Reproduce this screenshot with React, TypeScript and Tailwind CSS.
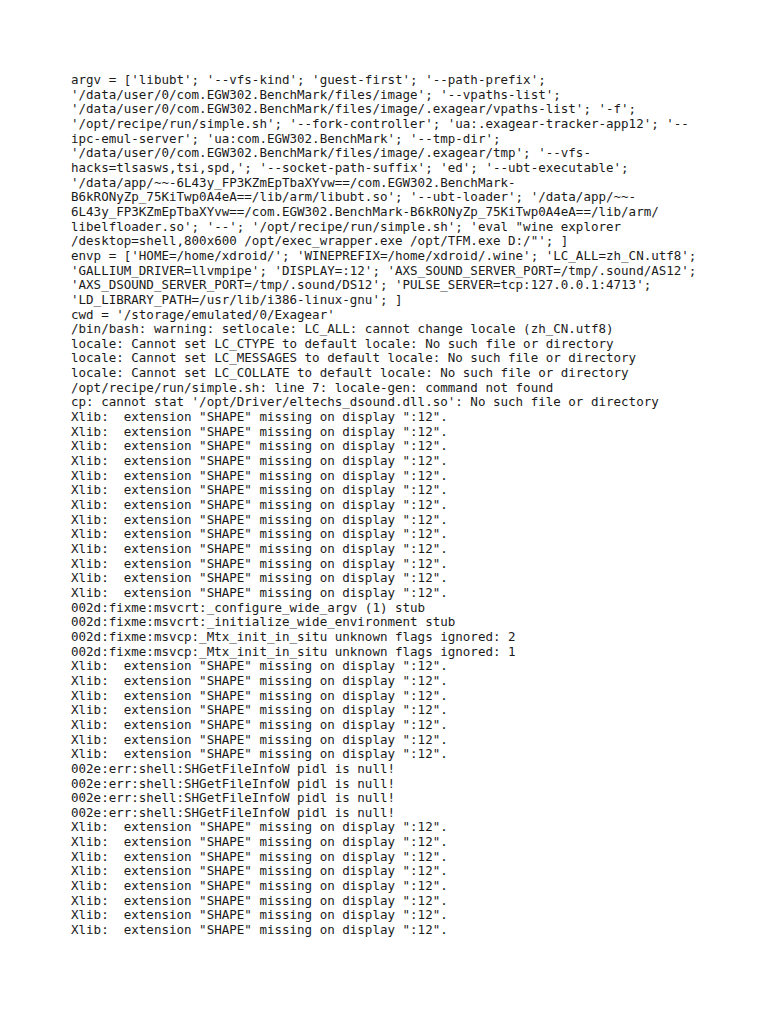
const xlib = 'Xlib:  extension "SHAPE" missing on display ":12".';
const shErr = "002e:err:shell:SHGetFileInfoW pidl is null!";

const logLines: string[] = [
  "argv = ['libubt'; '--vfs-kind'; 'guest-first'; '--path-prefix';",
  "'/data/user/0/com.EGW302.BenchMark/files/image'; '--vpaths-list';",
  "'/data/user/0/com.EGW302.BenchMark/files/image/.exagear/vpaths-list'; '-f';",
  "'/opt/recipe/run/simple.sh'; '--fork-controller'; 'ua:.exagear-tracker-app12'; '--",
  "ipc-emul-server'; 'ua:com.EGW302.BenchMark'; '--tmp-dir';",
  "'/data/user/0/com.EGW302.BenchMark/files/image/.exagear/tmp'; '--vfs-",
  "hacks=tlsasws,tsi,spd,'; '--socket-path-suffix'; 'ed'; '--ubt-executable';",
  "'/data/app/~~-6L43y_FP3KZmEpTbaXYvw==/com.EGW302.BenchMark-",
  "B6kRONyZp_75KiTwp0A4eA==/lib/arm/libubt.so'; '--ubt-loader'; '/data/app/~~-",
  "6L43y_FP3KZmEpTbaXYvw==/com.EGW302.BenchMark-B6kRONyZp_75KiTwp0A4eA==/lib/arm/",
  "libelfloader.so'; '--'; '/opt/recipe/run/simple.sh'; 'eval \"wine explorer",
  "/desktop=shell,800x600 /opt/exec_wrapper.exe /opt/TFM.exe D:/\"'; ]",
  "envp = ['HOME=/home/xdroid/'; 'WINEPREFIX=/home/xdroid/.wine'; 'LC_ALL=zh_CN.utf8';",
  "'GALLIUM_DRIVER=llvmpipe'; 'DISPLAY=:12'; 'AXS_SOUND_SERVER_PORT=/tmp/.sound/AS12';",
  "'AXS_DSOUND_SERVER_PORT=/tmp/.sound/DS12'; 'PULSE_SERVER=tcp:127.0.0.1:4713';",
  "'LD_LIBRARY_PATH=/usr/lib/i386-linux-gnu'; ]",
  "cwd = '/storage/emulated/0/Exagear'",
  "/bin/bash: warning: setlocale: LC_ALL: cannot change locale (zh_CN.utf8)",
  "locale: Cannot set LC_CTYPE to default locale: No such file or directory",
  "locale: Cannot set LC_MESSAGES to default locale: No such file or directory",
  "locale: Cannot set LC_COLLATE to default locale: No such file or directory",
  "/opt/recipe/run/simple.sh: line 7: locale-gen: command not found",
  "cp: cannot stat '/opt/Driver/eltechs_dsound.dll.so': No such file or directory",
  ...Array(13).fill(xlib),
  "002d:fixme:msvcrt:_configure_wide_argv (1) stub",
  "002d:fixme:msvcrt:_initialize_wide_environment stub",
  "002d:fixme:msvcp:_Mtx_init_in_situ unknown flags ignored: 2",
  "002d:fixme:msvcp:_Mtx_init_in_situ unknown flags ignored: 1",
  ...Array(7).fill(xlib),
  ...Array(4).fill(shErr),
  ...Array(8).fill(xlib),
];

export default function App() {
  return (
    <div className="min-h-[1024px] w-[768px] bg-white pl-[71px] pt-[73px]">
      <div className="font-['DejaVu_Sans_Mono',monospace] text-[12.52px] leading-[14.66px] text-[#1a1a1a]">
        {logLines.map((line, i) => (
          <div key={i} className="whitespace-pre">
            {line}
          </div>
        ))}
      </div>
    </div>
  );
}
